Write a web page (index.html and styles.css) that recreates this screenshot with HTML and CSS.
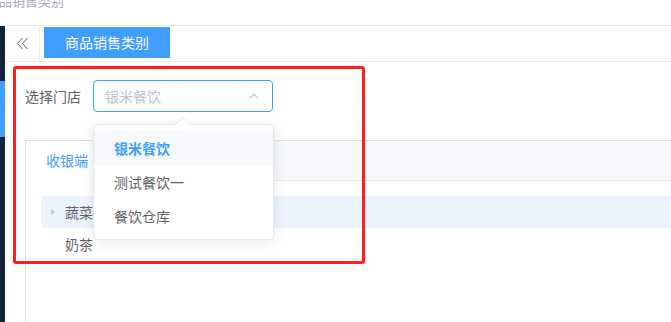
FILE: index.html
```html
<!DOCTYPE html>
<html lang="zh-CN">
<head>
    <meta charset="UTF-8">
    <meta name="viewport" content="width=device-width, initial-scale=1.0">
    <title>商品销售类别</title>
    <link rel="stylesheet" href="styles.css">
</head>
<body>
    <!-- Page title (scrolled) -->
    <div class="topbar">
        <div class="page-title">商品销售类别</div>
    </div>

    <div class="main">
        <div class="sidebar">
            <div class="sidebar-active"></div>
        </div>

        <div class="content">
            <!-- Tag view bar -->
            <div class="tags-bar">
                <div class="collapse-btn">
                    <svg width="13" height="13" viewBox="0 0 13 13">
                        <path d="M6.5 1 L1.5 6.5 L6.5 12 M11.5 1 L6.5 6.5 L11.5 12" fill="none" stroke="#606266" stroke-width="1"/>
                    </svg>
                </div>
                <div class="tag-active">商品销售类别</div>
            </div>

            <div class="page-body">
                <!-- Store select -->
                <div class="form-row">
                    <label class="form-label">选择门店</label>
                    <div class="select-wrap">
                        <div class="select-input">
                            <span class="placeholder">银米餐饮</span>
                            <svg class="select-arrow" width="10" height="6" viewBox="0 0 10 6">
                                <path d="M0.8 5.4 L5 1.2 L9.2 5.4" fill="none" stroke="#c0c4cc" stroke-width="1.2"/>
                            </svg>
                        </div>
                        <div class="select-dropdown">
                            <div class="dropdown-arrow"></div>
                            <ul class="dropdown-list">
                                <li class="selected">银米餐饮</li>
                                <li>测试餐饮一</li>
                                <li>餐饮仓库</li>
                            </ul>
                        </div>
                    </div>
                </div>

                <!-- Tabs card -->
                <div class="tabs-card">
                    <div class="tabs-header">
                        <div class="tab-item active">收银端</div>
                    </div>
                    <div class="tabs-content">
                        <div class="tree-node current">
                            <span class="expand-icon"></span>
                            <span class="node-label">蔬菜</span>
                        </div>
                        <div class="tree-node">
                            <span class="expand-icon leaf"></span>
                            <span class="node-label">奶茶</span>
                        </div>
                    </div>
                </div>
            </div>
        </div>
    </div>

    <!-- Annotation box -->
    <div class="highlight-box"></div>
</body>
</html>
```

FILE: styles.css
```css
body {
    margin: 0;
    font-family: "Noto Sans CJK SC", "Noto Sans", sans-serif;
    font-size: 14px;
    color: #606266;
    background: #fff;
    overflow: hidden;
    height: 322px;
    position: relative;
}

.topbar {
    height: 25px;
    border-bottom: 1px solid #ebebeb;
    overflow: hidden;
}

.page-title {
    margin-top: -8px;
    margin-left: -14px;
    font-size: 13px;
    color: #a3abb8;
    line-height: 18px;
}

.main {
    display: flex;
    height: 296px;
}

.sidebar {
    width: 5px;
    background: #12233a;
    padding-top: 55px;
    box-sizing: border-box;
}

.sidebar-active {
    height: 56px;
    background: #409eff;
}

.content {
    flex: 1;
    overflow: hidden;
}

.tags-bar {
    height: 35px;
    border-bottom: 1px solid #e8e8e8;
    display: flex;
    align-items: flex-start;
}

.collapse-btn {
    width: 34px;
    height: 35px;
    border-right: 1px solid #ececec;
    display: flex;
    align-items: center;
    justify-content: center;
}

.tag-active {
    margin-left: 4px;
    margin-top: 1px;
    width: 126px;
    height: 31px;
    line-height: 31px;
    text-align: center;
    background: #409eff;
    color: #fff;
    font-size: 14px;
}

.page-body {
    padding: 18px 0 0 20px;
}

.form-row {
    display: flex;
    align-items: center;
}

.form-label {
    width: 68px;
    color: #606266;
}

.select-wrap {
    position: relative;
    width: 180px;
}

.select-input {
    height: 32px;
    box-sizing: border-box;
    border: 1px solid #409eff;
    border-radius: 4px;
    display: flex;
    align-items: center;
    justify-content: space-between;
    padding: 0 13px 0 11px;
}

.placeholder {
    color: #c0c4cc;
}

.select-dropdown {
    position: absolute;
    top: 44px;
    left: 0;
    width: 181px;
    background: #fff;
    border: 1px solid #e4e7ed;
    border-radius: 4px;
    box-shadow: 0 2px 12px 0 rgba(0, 0, 0, 0.1);
    box-sizing: border-box;
    z-index: 10;
}

.dropdown-arrow {
    position: absolute;
    top: -6px;
    left: 83px;
    width: 10px;
    height: 10px;
    background: #fff;
    border-left: 1px solid #e4e7ed;
    border-top: 1px solid #e4e7ed;
    transform: rotate(45deg);
}

.dropdown-list {
    list-style: none;
    margin: 0;
    padding: 6px 0;
    position: relative;
}

.dropdown-list li {
    height: 34px;
    line-height: 34px;
    padding: 0 20px;
    color: #606266;
}

.dropdown-list li.selected {
    background: #f5f7fa;
    color: #409eff;
    font-weight: bold;
}

.tabs-card {
    margin-top: 28px;
    width: 700px;
    height: 300px;
    border: 1px solid #dcdfe6;
    box-sizing: border-box;
}

.tabs-header {
    height: 39px;
    background: #f5f7fa;
    border-bottom: 1px solid #e4e7ed;
    display: flex;
}

.tab-item {
    padding: 0 20px;
    line-height: 39px;
    height: 40px;
    color: #909399;
}

.tab-item.active {
    background: #fff;
    color: #409eff;
    border-right: 1px solid #dcdfe6;
}

.tabs-content {
    padding: 15px;
}

.tree-node {
    height: 32px;
    display: flex;
    align-items: center;
    color: #606266;
}

.tree-node.current {
    background: #ebf4fe;
}

.expand-icon {
    width: 0;
    height: 0;
    margin: 0 10px 0 10px;
    border-top: 3.5px solid transparent;
    border-bottom: 3.5px solid transparent;
    border-left: 4px solid #c0c4cc;
}

.expand-icon.leaf {
    border-left-color: transparent;
}

.highlight-box {
    position: absolute;
    left: 13px;
    top: 66px;
    width: 346px;
    height: 192px;
    border: 3px solid #ff1f1f;
    border-radius: 3px;
    pointer-events: none;
}
```
